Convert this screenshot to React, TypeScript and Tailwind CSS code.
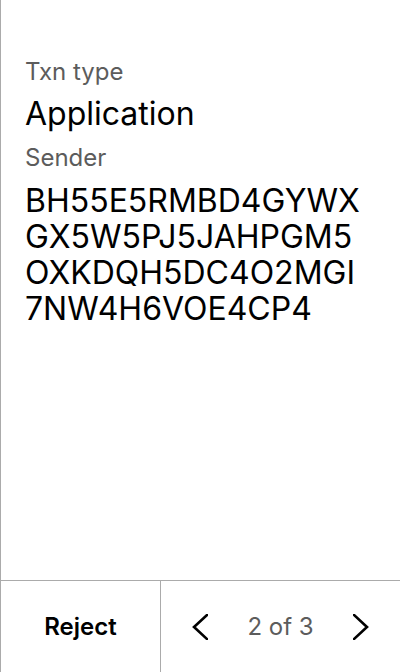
const address = [
  "BH55E5RMBD4GYWX",
  "GX5W5PJ5JAHPGM5",
  "OXKDQH5DC4O2MGI",
  "7NW4H6VOE4CP4",
];

function Chevron({ dir }: { dir: "left" | "right" }) {
  return (
    <svg width="16" height="26" viewBox="0 0 16 26" fill="none">
      <polyline
        points={dir === "left" ? "15,1 2,13 15,25" : "1,1 14,13 1,25"}
        stroke="black"
        strokeWidth="2.6"
        strokeLinecap="square"
        strokeLinejoin="miter"
      />
    </svg>
  );
}

export default function App() {
  return (
    <div
      className="flex h-[672px] w-[400px] flex-col border-l border-[#ababab] bg-white text-black"
      style={{ fontFamily: "Inter, 'Noto Sans', sans-serif" }}
    >
      <div className="flex-1 px-6 pt-[56px]">
        <p className="text-[24px] leading-[32px] text-[#5c5c5c]">Txn type</p>
        <p className="mt-[6px] text-[32px] leading-[40px]">Application</p>
        <p className="mt-[8px] text-[24px] leading-[32px] text-[#5c5c5c]">Sender</p>
        <div className="mt-[9px] text-[32px] leading-[36px]">
          {address.map((line) => (
            <p key={line}>{line}</p>
          ))}
        </div>
      </div>

      <div className="flex h-[92px] border-t border-[#ababab]">
        <button className="flex w-[159px] items-center justify-center text-[24px] font-semibold">
          Reject
        </button>
        <div className="flex flex-1 items-center justify-between border-l border-[#ababab] px-[31px]">
          <Chevron dir="left" />
          <span className="text-[24px] text-[#5c5c5c]">2 of 3</span>
          <Chevron dir="right" />
        </div>
      </div>
    </div>
  );
}
